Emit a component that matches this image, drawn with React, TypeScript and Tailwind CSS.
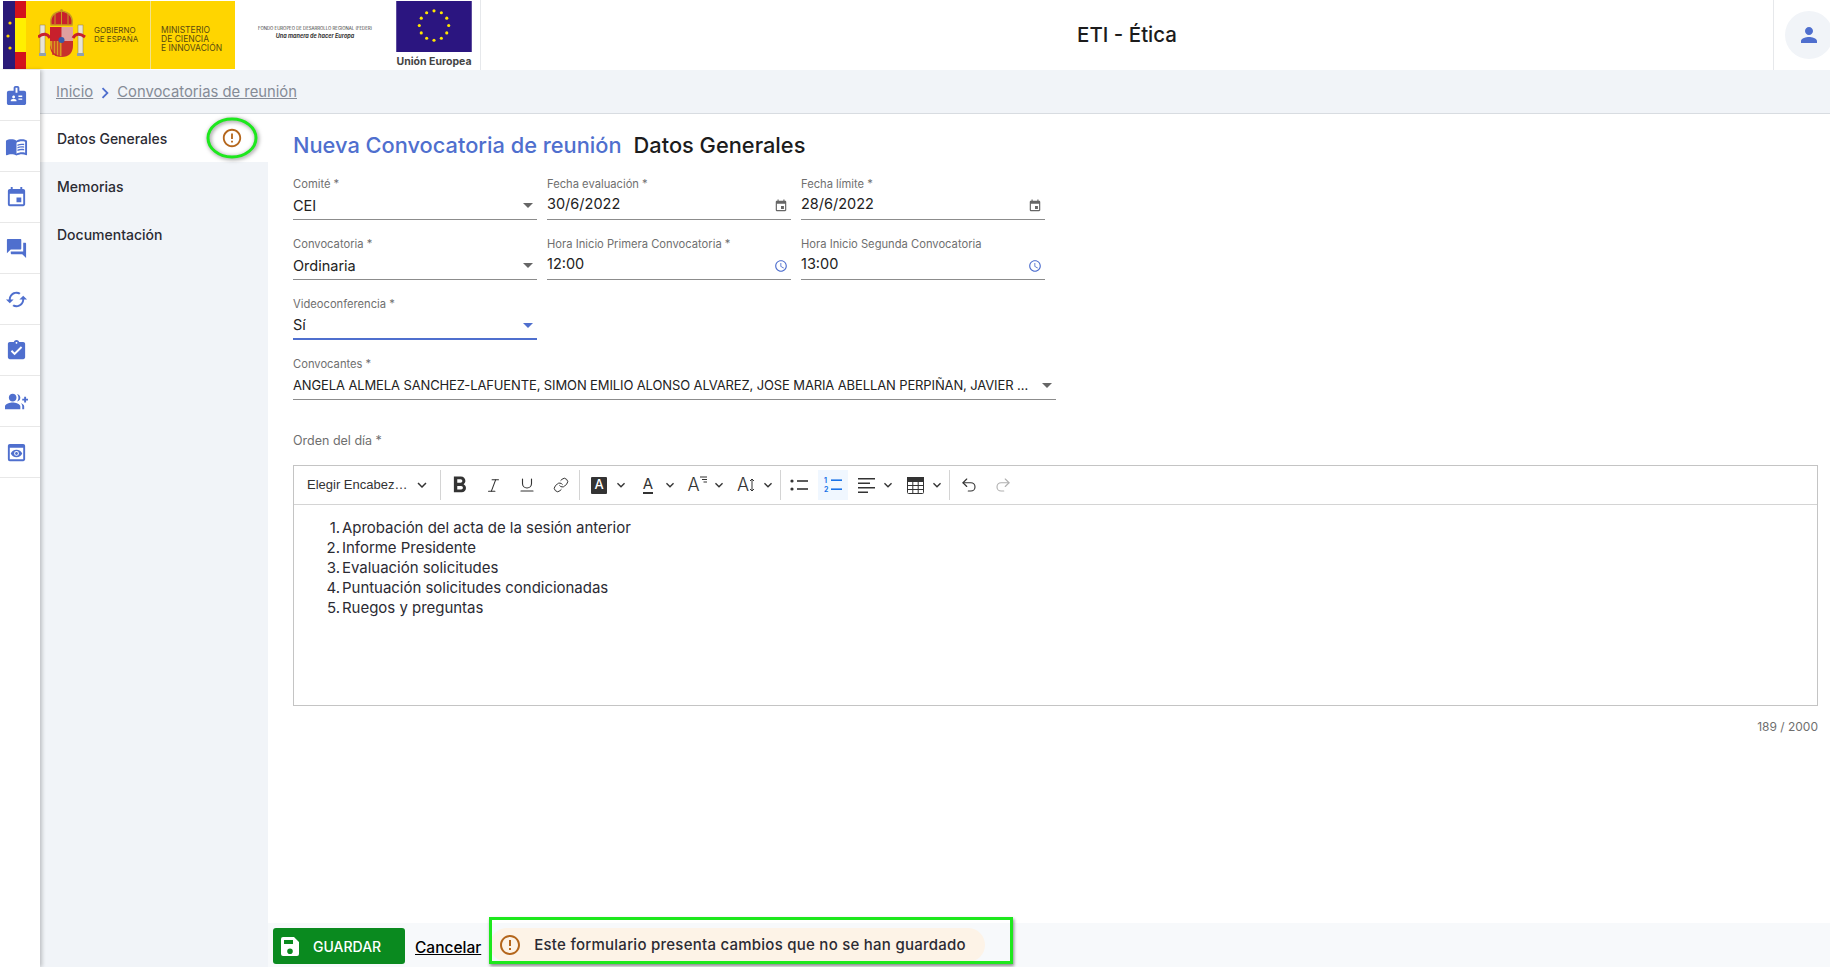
import type { ReactNode } from "react";
import { Italic, Link as LinkIcon, Redo2, Underline, Undo2 } from "lucide-react";
import {
    MdAssignmentTurnedIn,
    MdBadge,
    MdCached,
    MdChevronRight,
    MdErrorOutline,
    MdEvent,
    MdFormatBold,
    MdGroupAdd,
    MdKeyboardArrowDown,
    MdMenuBook,
    MdOutlineSchedule,
    MdPerson,
    MdPreview,
    MdQuestionAnswer,
} from "react-icons/md";

const RAIL_ICONS = [MdBadge, MdMenuBook, MdEvent, MdQuestionAnswer, MdCached, MdAssignmentTurnedIn, MdGroupAdd, MdPreview];

const SECTIONS = ["Datos Generales", "Memorias", "Documentación"];

const ORDEN = [
    "Aprobación del acta de la sesión anterior",
    "Informe Presidente",
    "Evaluación solicitudes",
    "Puntuación solicitudes condicionadas",
    "Ruegos y preguntas",
];

function Caret({ active }: { active?: boolean }) {
    return (
        <svg width="10" height="5" viewBox="0 0 10 5" className={active ? "fill-[#4f6fce]" : "fill-[#666666]"}>
            <path d="M0 0h10L5 5z" />
        </svg>
    );
}

function Field({
    label,
    value,
    kind = "select",
    active,
    small,
}: {
    label: string;
    value: string;
    kind?: "select" | "date" | "time";
    active?: boolean;
    small?: boolean;
}) {
    return (
        <div className={`flex h-[44px] flex-col ${active ? "border-b-2 border-[#4f6fce]" : "border-b border-[#8c8c8c]"}`}>
            <label className="h-[16px] text-[11.2px] leading-[16px] text-[#6f6f6f]">{label}</label>
            <div className="flex flex-1 items-center justify-between text-[14.5px] text-[#222222]">
                <span className={small ? "whitespace-nowrap text-[13px] tracking-[-0.12px]" : kind === "select" ? "" : "-mt-[3px]"}>{value}</span>
                {kind === "select" && (
                    <span className="pr-[4px]">
                        <Caret active={active} />
                    </span>
                )}
                {kind === "date" && <MdEvent className="mr-[3px] text-[14px] text-[#666666]" />}
                {kind === "time" && <MdOutlineSchedule className="mr-[3px] text-[14px] text-[#4f6fce]" />}
            </div>
        </div>
    );
}

function ToolButton({ children, width = "w-[34px]", on }: { children: ReactNode; width?: string; on?: boolean }) {
    return (
        <div className={`flex h-[30px] items-center justify-center ${width} ${on ? "bg-[#f0f7ff]" : ""}`}>{children}</div>
    );
}

function SplitButton({ children }: { children: ReactNode }) {
    return (
        <div className="flex h-[30px] w-[49px] items-center justify-center gap-[1px]">
            <div className="flex w-[26px] items-center justify-center">{children}</div>
            <MdKeyboardArrowDown className="text-[16px] text-[#333333]" />
        </div>
    );
}

function Sep() {
    return <div className="mx-[1px] h-[30px] w-px bg-[#d4d4d4]" />;
}

function Toolbar() {
    return (
        <div className="flex h-[39px] items-center border-b border-[#d4d4d4] pl-[2px] text-[#333333]">
            <div className="flex w-[143px] items-center pl-[11px] pr-[8px] font-['Liberation_Sans',sans-serif] text-[13px]">
                <span className="flex-1">Elegir Encabez…</span>
                <MdKeyboardArrowDown className="text-[18px]" />
            </div>
            <Sep />
            <ToolButton><MdFormatBold className="text-[27px]" /></ToolButton>
            <ToolButton><Italic size={17} strokeWidth={1.5} /></ToolButton>
            <ToolButton><Underline size={18} strokeWidth={1.5} /></ToolButton>
            <ToolButton><LinkIcon size={16} strokeWidth={1.5} /></ToolButton>
            <Sep />
            <div className="w-[2px]" />
            <SplitButton>
                <span className="flex h-[17px] w-[16px] items-center justify-center rounded-[1px] bg-[#333333] text-[13px] font-medium text-white">A</span>
            </SplitButton>
            <SplitButton>
                <span className="flex h-[18px] flex-col items-center border-b-2 border-[#333333] text-[15px] leading-[16px]">A</span>
            </SplitButton>
            <SplitButton>
                <span className="flex items-start text-[18px] font-light leading-none">
                    A
                    <svg width="7" height="8" viewBox="0 0 7 8" className="stroke-[#333333]">
                        <path d="M0 1h7M2 3.5h5M3.5 6h3.5" strokeWidth="1" />
                    </svg>
                </span>
            </SplitButton>
            <SplitButton>
                <span className="flex items-center text-[18px] font-light leading-none">
                    A
                    <svg width="6" height="14" viewBox="0 0 6 14" className="stroke-[#333333]">
                        <path d="M3 1v12M1 3l2-2 2 2M1 11l2 2 2-2" strokeWidth="1" fill="none" />
                    </svg>
                </span>
            </SplitButton>
            <Sep />
            <ToolButton>
                <svg width="18" height="14" viewBox="0 0 18 14" className="fill-[#333333]">
                    <circle cx="2" cy="3" r="1.6" />
                    <circle cx="2" cy="11" r="1.6" />
                    <rect x="7" y="2.2" width="11" height="1.6" />
                    <rect x="7" y="10.2" width="11" height="1.6" />
                </svg>
            </ToolButton>
            <div className="w-[2px]" />
            <ToolButton width="w-[30px]" on>
                <svg width="18" height="18" viewBox="0 0 18 18" className="fill-[#1a73e8]">
                    <text x="0" y="7" fontSize="7" fontWeight="700">1</text>
                    <text x="0" y="16" fontSize="7" fontWeight="700">2</text>
                    <rect x="7" y="3.4" width="11" height="1.6" />
                    <rect x="7" y="12.4" width="11" height="1.6" />
                </svg>
            </ToolButton>
            <div className="w-[2px]" />
            <SplitButton>
                <svg width="17" height="15" viewBox="0 0 17 15" className="fill-[#333333]">
                    <rect width="17" height="1.5" />
                    <rect y="4.5" width="12" height="1.5" />
                    <rect y="9" width="17" height="1.5" />
                    <rect y="13.5" width="10" height="1.5" />
                </svg>
            </SplitButton>
            <SplitButton>
                <svg width="17" height="17" viewBox="0 0 17 17" className="fill-none stroke-[#333333]">
                    <rect x="0.5" y="0.5" width="16" height="16" rx="1" />
                    <rect x="0.5" y="0.5" width="16" height="4" className="fill-[#333333]" />
                    <path d="M0.5 8.5h16M0.5 12.5h16M5.8 4.5v12M11.2 4.5v12" />
                </svg>
            </SplitButton>
            <Sep />
            <div className="w-[1px]" />
            <ToolButton><Undo2 size={18} strokeWidth={1.5} /></ToolButton>
            <ToolButton><Redo2 size={18} strokeWidth={1.5} className="text-[#b0b0b0]" /></ToolButton>
        </div>
    );
}

function GovLogo() {
    return (
        <div className="flex h-[70px] w-[481px] shrink-0 items-start border-r border-[#e6e8eb]">
            <div className="ml-[3px] mt-px flex h-[68px] w-[232px] bg-[#ffd500]">
                <svg width="23" height="68" viewBox="0 0 23 68" className="shrink-0">
                    <rect width="12" height="68" fill="#2a1a78" />
                    <rect x="12" width="11" height="68" fill="#d3121c" />
                    <rect x="12" y="17" width="11" height="34" fill="#ffef00" />
                    <circle cx="7" cy="22" r="1.6" fill="#ffd500" />
                    <circle cx="5" cy="35" r="1.6" fill="#ffd500" />
                    <circle cx="7" cy="47" r="1.6" fill="#ffd500" />
                </svg>
                <svg width="48" height="50" viewBox="0 0 48 50" className="ml-[12px] mt-[8px] shrink-0">
                    <rect x="2" y="16" width="5" height="30" fill="#e8e4d4" stroke="#8a7a50" strokeWidth="0.5" />
                    <rect x="40" y="16" width="5" height="30" fill="#e8e4d4" stroke="#8a7a50" strokeWidth="0.5" />
                    <rect x="1" y="44" width="7" height="3" fill="#8fa0b0" />
                    <rect x="39" y="44" width="7" height="3" fill="#8fa0b0" />
                    <path d="M12 18h23v18q0 12-11.500 12T12 36z" fill="#c8302c" />
                    <rect x="12" y="18" width="11.500" height="14" fill="#c8202c" />
                    <rect x="23.500" y="18" width="11.500" height="14" fill="#dfa0a0" />
                    <path d="M12 32h11.500v15.500Q14 46 12 36z" fill="#d89a20" />
                    <path d="M15 32v14M18 32v15M21 32v15" stroke="#c8202c" strokeWidth="1.200" />
                    <circle cx="23.500" cy="31" r="3" fill="#3a5aa8" />
                    <path d="M0 28q8-6 12 1M47 28q-8-6-12 1" stroke="#c8202c" strokeWidth="3" fill="none" />
                    <path d="M13 16q-2-12 10.500-14Q36 4 34 16z" fill="#c8202c" stroke="#c89a20" strokeWidth="1.500" />
                    <path d="M23.500 3v13M17 5v10M30 5v10" stroke="#c89a20" strokeWidth="1" />
                    <circle cx="23.500" cy="1.500" r="1.500" fill="#c89a20" />
                </svg>
                <div className="ml-[8px] mt-[25px] w-[56px] text-[8px] leading-[9px] text-[#5a4a10]">
                    GOBIERNO
                    <br />
                    DE ESPAÑA
                </div>
                <div className="h-full w-px bg-[#f2e28a]" />
                <div className="ml-[10px] mt-[25px] text-[8.5px] leading-[9px] text-[#5a4a10]">
                    MINISTERIO
                    <br />
                    DE CIENCIA
                    <br />
                    E INNOVACIÓN
                </div>
            </div>
            <div className="mt-[26px] flex w-[160px] flex-col items-center text-[#333333]">
                <span className="whitespace-nowrap text-[4.3px] leading-[6px]">FONDO EUROPEO DE DESARROLLO REGIONAL (FEDER)</span>
                <span className="text-[5.5px] font-bold italic leading-[8px]">Una manera de hacer Europa</span>
            </div>
            <div className="flex w-[78px] flex-col items-center">
                <svg width="76" height="51" viewBox="0 0 77 52" className="mt-[1px]">
                    <rect width="77" height="52" fill="#2b1580" />
                    {Array.from({ length: 12 }).map((_, i) => (
                        <circle
                            key={i}
                            cx={38.5 + 15 * Math.sin((i * Math.PI) / 6)}
                            cy={25 - 15 * Math.cos((i * Math.PI) / 6)}
                            r="1.6"
                            fill="#ffe600"
                        />
                    ))}
                </svg>
                <span className="mt-[4px] whitespace-nowrap text-[10.5px] font-bold leading-[12px] text-[#444444]">Unión Europea</span>
            </div>
        </div>
    );
}

export default function App() {
    return (
        <div className="flex h-[967px] w-[1830px] flex-col overflow-hidden bg-white font-['Inter','Liberation_Sans',sans-serif]">
            <header className="flex h-[70px] shrink-0 items-stretch">
                <GovLogo />
                <div className="flex flex-1 items-center justify-center text-[20.5px] font-medium text-[#1c1c1c]">ETI - Ética</div>
                <div className="flex w-[57px] items-center border-l border-[#e6e8eb] pl-[11px]">
                    <div className="flex h-[48px] w-[48px] shrink-0 items-center justify-center rounded-full bg-[#f1f4f8]">
                        <MdPerson className="text-[24px] text-[#4f6fce]" />
                    </div>
                </div>
            </header>

            <div className="flex min-h-0 flex-1">
                {/* Icon rail */}
                <nav className="z-10 w-[40px] shrink-0 bg-white shadow-[2px_0_4px_rgba(0,0,0,0.22)]">
                    {RAIL_ICONS.map((Icon, i) => (
                        <div key={i} className="flex h-[51px] items-center justify-center border-b border-[#e8e8e8] pr-[8px]">
                            <Icon className="text-[23px] text-[#4f6fce]" />
                        </div>
                    ))}
                </nav>

                <div className="flex min-w-0 flex-1 flex-col">
                    <div className="flex h-[44px] shrink-0 items-center border-b border-[#d8dce1] bg-[#f1f4f8] pl-[16px] pt-[2px] text-[14.8px] text-[#858b96]">
                        <a className="underline">Inicio</a>
                        <MdChevronRight className="mx-[1px] text-[22px] text-[#4f6fce]" />
                        <a className="underline">Convocatorias de reunión</a>
                    </div>

                    <div className="flex min-h-0 flex-1">
                        <aside className="w-[228px] shrink-0 bg-[#f1f4f8] text-[14px] font-medium text-[#2b2b33]">
                            {SECTIONS.map((s, i) => (
                                <div key={s} className={`relative flex h-[48px] items-center pl-[17px] ${i === 0 ? "bg-white" : ""}`}>
                                    {s}
                                    {i === 0 && (
                                        <>
                                            <MdErrorOutline className="absolute left-[181px] top-[13px] text-[22px] text-[#b4661c]" />
                                            {/* green annotation in the capture */}
                                            <svg width="54" height="44" viewBox="0 0 54 44" className="absolute left-[165px] top-[2px] drop-shadow-[1px_1px_2px_rgba(0,0,0,0.5)]">
                                                <ellipse cx="27" cy="22" rx="24" ry="19" fill="none" stroke="#1de81d" strokeWidth="3" />
                                            </svg>
                                        </>
                                    )}
                                </div>
                            ))}
                        </aside>

                        <main className="flex min-w-0 flex-1 flex-col">
                            <div className="flex-1 pl-[25px] pr-[12px] pt-[16px]">
                                <h1 className="mb-[16px] flex h-[30px] items-center gap-[12px] text-[21.8px] font-medium">
                                    <span className="text-[#4f6fce]">Nueva Convocatoria de reunión</span>
                                    <span className="text-[#1c1c1c]">Datos Generales</span>
                                </h1>

                                <div className="grid w-[752px] grid-cols-[244px_244px_244px] gap-x-[10px] gap-y-[16px]">
                                    <Field label="Comité *" value="CEI" />
                                    <Field label="Fecha evaluación *" value="30/6/2022" kind="date" />
                                    <Field label="Fecha límite *" value="28/6/2022" kind="date" />
                                    <Field label="Convocatoria *" value="Ordinaria" />
                                    <Field label="Hora Inicio Primera Convocatoria *" value="12:00" kind="time" />
                                    <Field label="Hora Inicio Segunda Convocatoria" value="13:00" kind="time" />
                                    <Field label="Videoconferencia *" value="Sí" active />
                                </div>

                                <div className="mt-[16px] w-[763px]">
                                    <Field
                                        small
                                        label="Convocantes *"
                                        value="ANGELA ALMELA SANCHEZ-LAFUENTE, SIMON EMILIO ALONSO ALVAREZ, JOSE MARIA ABELLAN PERPIÑAN, JAVIER …"
                                    />
                                </div>

                                <div className="mt-[33px] h-[32px] text-[12.5px] leading-[16px] text-[#6f6f6f]">Orden del día *</div>

                                <div className="h-[241px] border border-[#c4c4c4]">
                                    <Toolbar />
                                    <ol className="pl-[6px] pt-[13px] text-[15px] tracking-[-0.03px] leading-[20px] text-[#2b2b33]">
                                        {ORDEN.map((item, i) => (
                                            <li key={item} className="flex gap-[2px]">
                                                <span className="w-[40px] text-right">{i + 1}.</span>
                                                {item}
                                            </li>
                                        ))}
                                    </ol>
                                </div>
                                <div className="mt-[12px] text-right text-[12px] text-[#6f6f6f]">189 / 2000</div>
                            </div>

                            <footer className="relative flex h-[44px] shrink-0 items-start bg-[#f7f9fb] pl-[5px] pt-[5px]">
                                <button className="flex h-[36px] w-[132px] items-center rounded-[3px] bg-[#0a8a1f] pl-[8px] text-[14px] font-medium text-white">
                                    <svg width="18" height="19" viewBox="0 0 18 19" className="fill-white">
                                        <path fillRule="evenodd" d="M2 0h11l5 5v12a2 2 0 0 1-2 2H2a2 2 0 0 1-2-2V2a2 2 0 0 1 2-2zm1 3v4h9V3zm6 8.5a2.8 2.8 0 1 0 0 5.6 2.8 2.8 0 0 0 0-5.6z" />
                                    </svg>
                                    <span className="ml-[14px]">GUARDAR</span>
                                </button>
                                <a className="ml-[10px] mt-[8px] text-[15.5px] font-medium text-black underline">Cancelar</a>
                                <div className="ml-[9px] flex h-[34px] w-[495px] items-center rounded-full bg-[#fdf3e7] pl-[8px] text-[15px] font-medium tracking-[0.25px] text-[#2b2b33]">
                                    <MdErrorOutline className="text-[24px] text-[#b4661c]" />
                                    <span className="ml-[12px]">Este formulario presenta cambios que no se han guardado</span>
                                </div>
                                {/* green annotation in the capture */}
                                <div className="absolute left-[221px] top-[-6px] h-[47px] w-[524px] border-[3px] border-[#1de81d] shadow-[1px_2px_3px_rgba(0,0,0,0.45)]" />
                            </footer>
                        </main>
                    </div>
                </div>
            </div>
        </div>
    );
}
